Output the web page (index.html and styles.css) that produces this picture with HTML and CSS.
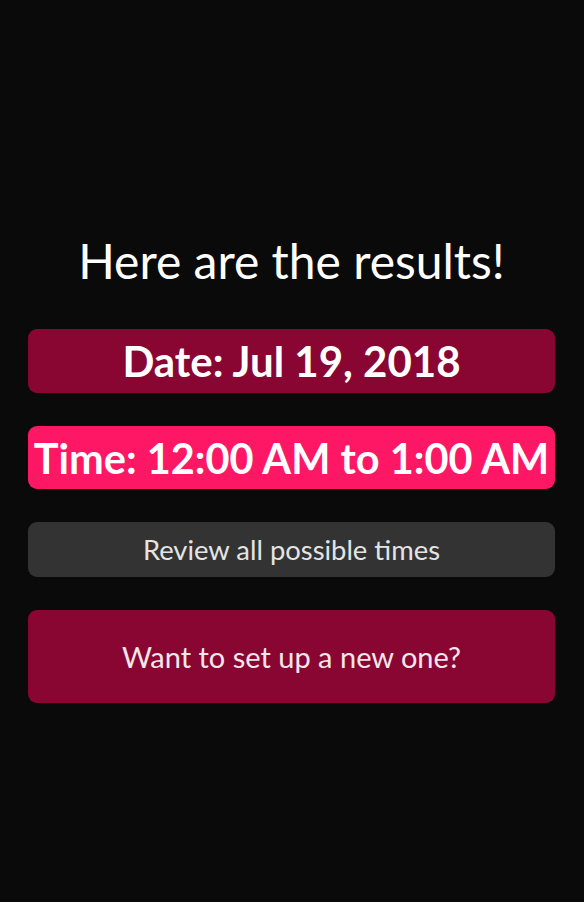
FILE: index.html
```html
<!DOCTYPE html>
<html>
<head>
<meta charset="utf-8">
<link rel="stylesheet" href="styles.css">
</head>
<body>
<main class="screen">
  <h1 class="title">Here are the results!</h1>
  <div class="pill pill-date">Date: Jul 19, 2018</div>
  <div class="pill pill-time">Time: 12:00 AM to 1:00 AM</div>
  <div class="pill pill-review">Review all possible times</div>
  <div class="pill pill-new">Want to set up a new one?</div>
</main>
</body>
</html>
```
FILE: styles.css
```css
html, body {
  margin: 0;
  padding: 0;
  background: #0a0a0a;
}
body {
  width: 584px;
  height: 902px;
  font-family: "Lato", "Noto Sans", sans-serif;
  color: #ffffff;
}
.screen {
  display: flex;
  flex-direction: column;
  padding: 233px 29px 0 28px;
  gap: 33px;
}
.title {
  margin: 0 0 7px 0;
  font-size: 48px;
  font-weight: 400;
  line-height: 56px;
  text-align: center;
}
.pill {
  border-radius: 9px;
  text-align: center;
  display: flex;
  align-items: center;
  justify-content: center;
  white-space: nowrap;
}
.pill-date {
  height: 64px;
  background: #8a0632;
  font-size: 42px;
  font-weight: 700;
}
.pill-time {
  height: 63px;
  background: #fd1764;
  font-size: 41.5px;
  font-weight: 700;
}
.pill-review {
  height: 55px;
  background: #333333;
  color: #e4e4e4;
  font-size: 27.4px;
  font-weight: 400;
}
.pill-new {
  height: 93px;
  background: #8a0632;
  color: #f2e6ea;
  font-size: 29px;
  font-weight: 400;
}
```
